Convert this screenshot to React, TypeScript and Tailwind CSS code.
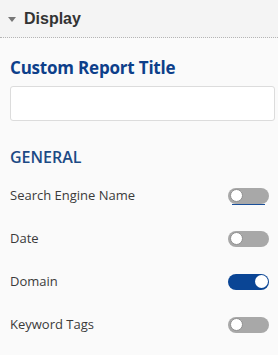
import React from "react";

const rows = [
  { label: "Search Engine Name", on: false, glitch: true },
  { label: "Date", on: false, glitch: false },
  { label: "Domain", on: true, glitch: false },
  { label: "Keyword Tags", on: false, glitch: false },
];

function Toggle({ on, glitch }: { on: boolean; glitch: boolean }) {
  return (
    <div className="relative">
      <div
        className={
          "flex h-[16px] w-[41px] items-center rounded-full px-[1.5px] " +
          (on ? "justify-end bg-[#0a4595]" : "justify-start bg-[#a8a8a8]")
        }
      >
        <div
          className={
            "h-[13px] w-[13px] rounded-full bg-white " +
            (on ? "" : "border border-[#8f8f8f]")
          }
        />
      </div>
      {glitch && (
        <div className="absolute left-[4px] right-[4px] bottom-[-1px] h-[1px] bg-[#1a4f99]" />
      )}
    </div>
  );
}

export default function App() {
  return (
    <div className="h-[355px] w-[278px] overflow-hidden bg-[#fafafa] font-['Open_Sans',sans-serif]">
      <div className="flex h-[38px] items-center gap-[8px] border-b border-dotted border-[#b5b5b5] bg-[#f4f4f4] pl-[8px]">
        <svg width="8" height="5" viewBox="0 0 8 5" className="mt-[1px]">
          <path d="M0 0 L8 0 L4 5 Z" fill="#777" />
        </svg>
        <span className="font-['Liberation_Sans',Arial,sans-serif] text-[16px] font-bold text-[#333]">
          Display
        </span>
      </div>
      <div className="pl-[10px] pr-[3px]">
        <h2 className="mt-[18px] text-[17px] font-bold leading-[24px] tracking-[-0.2px] text-[#0d3f8a]">
          Custom Report Title
        </h2>
        <input
          type="text"
          className="mt-[6px] block h-[35px] w-full rounded-[3px] border border-[#dcdcdc] bg-white outline-none"
        />
        <h3 className="mt-[24px] text-[16px] font-semibold leading-[24px] text-[#1c4a85]">
          GENERAL
        </h3>
        <div className="mt-[5px] pr-[6px]">
          {rows.map((r, i) => (
            <div key={i} className="flex h-[43px] items-center justify-between">
              <span className="text-[13px] text-[#3a3a3a]">{r.label}</span>
              <Toggle on={r.on} glitch={r.glitch} />
            </div>
          ))}
        </div>
      </div>
    </div>
  );
}
